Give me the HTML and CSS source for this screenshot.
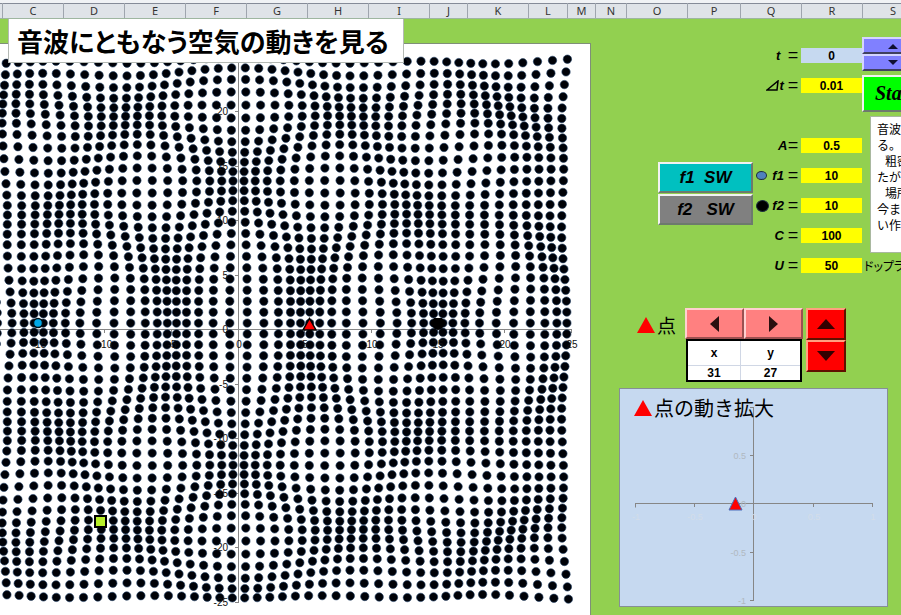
FILE: index.html
```html
<!DOCTYPE html>
<html lang="ja">
<head>
<meta charset="utf-8">
<title>音波にともなう空気の動きを見る</title>
<link rel="stylesheet" href="styles.css">
</head>
<body>
<header class="columns">
  <span class="col col-edge"></span><span class="col">C</span><span class="col">D</span><span class="col">E</span><span class="col">F</span><span class="col">G</span><span class="col">H</span><span class="col">I</span><span class="col col-j">J</span><span class="col">K</span><span class="col col-l">L</span><span class="col col-m">M</span><span class="col col-n">N</span><span class="col">O</span><span class="col col-p">P</span><span class="col">Q</span><span class="col">R</span><span class="col">S</span>
</header>
<main class="sheet">
  <section class="field">
    <h1 class="title">音波にともなう空気の動きを見る</h1>
    <svg class="chart" viewBox="0 44 590 571" role="img" aria-label="空気の動き">
      <g class="axis" id="axis"></g>
      <g class="dots" id="dots"></g>
      <g class="ticks" id="ticks"></g>
      <circle class="source-one" cx="38" cy="323" r="4.5"/>
      <path d="M430.500 323l3.500-5h8l3.500 5-3.500 5.500-4 1.500-4-1.500z"/>
      <path class="probe" d="M309.500 318.500l6.500 11.500h-13z"/>
      <rect class="marker" x="95" y="516" width="11" height="11"/>
    </svg>
  </section>

  <section class="side">
    <div class="controls">
      <div class="switches">
        <button class="raised switch switch-on">f1&nbsp; SW</button>
        <button class="raised switch switch-off">f2&nbsp;&nbsp; SW</button>
      </div>
      <div class="params">
        <div class="param"><label for="t">t&nbsp; <span class="eq">=</span></label><input class="cell cell-time" id="t" value="0"></div>
        <div class="param param-last"><label for="dt"><svg class="delta" viewBox="0 0 14 11" aria-label="Δ"><path d="M1 10L12 1L11 10Z"/></svg>t <span class="eq">=</span></label><input class="cell" id="dt" value="0.01"></div>
        <div class="param"><label for="a">A<span class="eq">=</span></label><input class="cell" id="a" value="0.5"></div>
        <div class="param"><i class="dot dot-one"></i><label for="f1">f1 <span class="eq">=</span></label><input class="cell" id="f1" value="10"></div>
        <div class="param"><i class="dot dot-two"></i><label for="f2">f2 <span class="eq">=</span></label><input class="cell" id="f2" value="10"></div>
        <div class="param"><label for="c">C <span class="eq">=</span></label><input class="cell" id="c" value="100"></div>
        <div class="param"><label for="u">U <span class="eq">=</span></label><input class="cell" id="u" value="50"></div>
      </div>
      <div class="extras">
        <button class="spin" aria-label="増やす"><svg viewBox="0 0 10 6"><path d="M0 6L5 1L10 6Z"/></svg></button>
        <button class="spin" aria-label="減らす"><svg viewBox="0 0 10 6"><path d="M0 0L5 5L10 0Z"/></svg></button>
        <button class="raised start">Start</button>
        <p class="note">音波<br>る。<br><span class="indent">粗密</span><br>たが<br><span class="indent">場所</span><br>今ま<br>い作</p>
        <p class="doppler">ドップラ</p>
      </div>
    </div>

    <div class="point">
      <div class="point-name"><svg class="tri" viewBox="0 0 18 16"><path d="M9 0L18 16H0Z"/></svg>点</div>
      <div class="point-box">
        <div class="pair">
          <button class="raised pink" aria-label="左"><svg viewBox="0 0 9 16"><path d="M9 0V16L0 8Z"/></svg></button>
          <button class="raised pink" aria-label="右"><svg viewBox="0 0 9 16"><path d="M0 0V16L9 8Z"/></svg></button>
        </div>
        <table class="xy">
          <thead><tr><th>x</th><th>y</th></tr></thead>
          <tbody><tr><td>31</td><td>27</td></tr></tbody>
        </table>
      </div>
      <div class="stack">
        <button class="raised red" aria-label="上"><svg viewBox="0 0 18 10"><path d="M0 10L9 0L18 10Z"/></svg></button>
        <button class="raised red" aria-label="下"><svg viewBox="0 0 18 10"><path d="M0 0L9 10L18 0Z"/></svg></button>
      </div>
    </div>

    <div class="zoom">
      <svg class="zoom-chart" viewBox="0 0 267 217" role="img" aria-label="点の動き拡大">
        <path class="zoom-axis" d="M15.500 118.500v-3.500M15 114.500h238M252.500 115v3M74.500 115v3M193.500 115v3M133.500 18v194M130 18.500h4M130 66.500h4M130 163.500h4M130 211.500h4"/>
        <g class="zoom-y"><text x="126" y="70">0.5</text><text x="126" y="118">0</text><text x="126" y="167">-0.5</text><text x="126" y="215">-1</text></g>
        <g class="zoom-x"><text x="16" y="131">-1</text><text x="75" y="131">-0.5</text><text x="134" y="131">0</text><text x="194" y="131">0.5</text><text x="253" y="131">1</text></g>
        <path class="zoom-point" d="M115.500 108l6.500 13h-13z"/>
      </svg>
      <h2 class="zoom-title"><svg class="tri" viewBox="0 0 18 16"><path d="M9 0L18 16H0Z"/></svg>点の動き拡大</h2>
    </div>
  </section>
</main>
<script src="script.js"></script>
</body>
</html>
```
FILE: styles.css
```css
* { box-sizing: border-box; }
body {
  margin: 0;
  min-height: 100vh;
  overflow: hidden;
  background: #92d050;
  color: #000;
  font: 12px "Liberation Sans", "Noto Sans CJK JP", sans-serif;
}
button, input { font: inherit; color: inherit; padding: 0; margin: 0; border-radius: 0; }
svg { display: block; }

.columns {
  display: flex;
  height: 19px;
  overflow: hidden;
  border-top: 3px solid #f0f2f5;
  border-bottom: 1px solid #9eb6a0;
  background: #dfe3e8;
  box-shadow: inset 0 1px #858b98;
}
.col {
  flex: 0 0 61px;
  border-right: 1px solid #9fa5ae;
  color: #333;
  font: 11px/16px "Noto Sans", sans-serif;
  text-align: center;
}
.col-edge { flex-basis: 3px; }
.col-j { flex-basis: 38px; }
.col-l { flex-basis: 39px; }
.col-m { flex-basis: 28px; }
.col-n { flex-basis: 31px; }
.col-p { flex-basis: 53px; }

.sheet {
  display: grid;
  grid-template-columns: minmax(0, 591px) minmax(310px, 1fr);
}
.field { position: relative; padding-top: 24px; }
.title {
  position: absolute;
  left: 8px;
  top: 0;
  margin: 0;
  padding: 0 14px 0 8px;
  border: 1px solid #b4b9b4;
  border-top: 0;
  background: #fff;
  font: bold 26px/43px "Noto Sans CJK JP", sans-serif;
  font-feature-settings: "palt";
  white-space: nowrap;
}
.chart {
  width: 100%;
  background: #fff;
  border-top: 1px solid #7f8f78;
  border-right: 1px solid #7f8f78;
}
.axis path { fill: none; stroke: #868686; }
.dots circle { fill: #000208; stroke: #203f66; stroke-width: 0.6; }
.ticks text { font: 10px "Liberation Sans", sans-serif; fill: #111; }
.ticks .y { text-anchor: end; }
.ticks .x { text-anchor: middle; }
.source-one { fill: #00a8e8; stroke: #001018; stroke-width: 1.5; }
.probe { fill: #f00; stroke: #000; stroke-width: 1.5; }
.marker { fill: #b8f02a; stroke: #000; stroke-width: 2; }

.controls { display: flex; height: 264px; }
.switches { flex: 0 0 162px; padding: 143px 0 0 67px; }
.raised {
  display: block;
  border: 2px solid;
  border-color: #f2f2f2 #6d7a6d #6d7a6d #f2f2f2;
}
.switch {
  width: 95px;
  height: 31px;
  margin-bottom: 1px;
  font: italic bold 17px "Liberation Sans", sans-serif;
  line-height: 26px;
}
.switch-on { background: #00c0c0; }
.switch-off { background: #808080; }

.params { flex: 0 0 109px; padding-top: 29px; }
.param {
  display: flex;
  align-items: center;
  justify-content: flex-end;
  height: 15px;
  margin-bottom: 15px;
}
.param-last { margin-bottom: 45px; }
.param label {
  display: flex;
  align-items: center;
  margin-right: 3px;
  font: italic bold 13px/15px "Liberation Sans", sans-serif;
  white-space: pre;
}
.eq { font-size: 18px; font-weight: normal; }
.delta { width: 14px; height: 11px; fill: none; stroke: #000; stroke-width: 1.5; }
.cell {
  flex: 0 0 61px;
  width: 61px;
  height: 15px;
  border: 0;
  background: #ff0;
  font-weight: bold;
  text-align: center;
}
.cell-time { background: #c6d9f0; }
.dot { border: 1px solid #1c2c40; border-radius: 50%; margin-right: auto; }
.dot-one { width: 11px; height: 9px; margin-left: 3px; background: #4f81bd; }
.dot-two { width: 13px; height: 12px; margin-left: 3px; background: #000; }

.extras { flex: 1 1 0; min-width: 0; overflow: hidden; padding-top: 18px; }
.spin {
  display: flex;
  width: 61px;
  height: 17px;
  align-items: center;
  justify-content: center;
  border: 2px solid;
  border-color: #d4d4ff #404060 #404060 #d4d4ff;
  background: #8080ff;
}
.spin svg { width: 10px; height: 6px; fill: #101030; }
.start {
  width: 85px;
  height: 37px;
  margin-top: 4px;
  padding-left: 11px;
  background: #0f0;
  font: italic bold 20px "Liberation Serif", serif;
  text-align: left;
}
.note {
  width: 180px;
  height: 137px;
  margin: 4px 0 0 8px;
  padding: 4px 0 0 6px;
  border: 1px solid #a9b8a0;
  background: #fff;
  font: 12px/16px "Noto Sans CJK JP", sans-serif;
}
.indent { padding-left: 8px; }
.doppler {
  margin: 5px 0 0 2px;
  font: 12px/16px "Noto Sans CJK JP", sans-serif;
  font-feature-settings: "palt";
  white-space: nowrap;
}

.point { display: flex; height: 105px; padding: 25px 0 0 46px; }
.point-name {
  display: flex;
  flex: 0 0 48px;
  height: 34px;
  align-items: center;
  font: 19px/34px "Noto Sans CJK JP", sans-serif;
}
.tri { flex: none; width: 18px; height: 16px; margin-right: 2px; fill: #f00; }
.point-box { flex: 0 0 118px; }
.pair { display: flex; }
.pink {
  display: flex;
  flex: 1;
  height: 31px;
  align-items: center;
  justify-content: center;
  border-color: #ffd0d0 #9c5050 #9c5050 #ffd0d0;
  background: #ff8080;
}
.pink svg { width: 9px; height: 16px; fill: #2a1010; }
.xy {
  width: 116px;
  height: 43px;
  margin-left: 1px;
  border: 2px solid #000;
  border-collapse: collapse;
  table-layout: fixed;
  background: #fff;
  font-size: 12px;
  font-weight: bold;
  text-align: center;
}
.xy th, .xy td { padding: 0; line-height: 14px; }
.xy th { height: 25px; border-bottom: 1px solid #d0d7e5; }
.xy th:first-child { width: 47%; }
.xy th:first-child, .xy td:first-child { border-right: 1px solid #d0d7e5; }
.stack { margin-left: 3px; }
.red {
  display: flex;
  width: 40px;
  height: 32px;
  align-items: center;
  justify-content: center;
  border-color: #ffa080 #601000 #601000 #ffa080;
  background: #f00;
}
.red svg { width: 18px; height: 10px; fill: #300; }

.zoom {
  position: relative;
  width: 269px;
  margin-left: 28px;
  border: 1px solid #868f96;
  background: #c6d9f0;
}
.zoom-chart { width: 100%; }
.zoom-title {
  position: absolute;
  left: 14px;
  top: 5px;
  display: flex;
  align-items: center;
  margin: 0;
  font: 20px/28px "Noto Sans CJK JP", sans-serif;
}
.zoom-axis { fill: none; stroke: #868686; }
.zoom-y text, .zoom-x text { font: 9px "Liberation Sans", sans-serif; fill: #b0b8c0; }
.zoom-y text { text-anchor: end; }
.zoom-x text { text-anchor: middle; fill: #d3dde9; }
.zoom-point { fill: #f00; stroke: #4a6ebb; }
```
FILE: script.js
```js
// Air particles displaced by two in-phase point sources (t = 0).
const NS = 'http://www.w3.org/2000/svg';
const UX = 13.32, UY = 10.9, OX = 238.5, OY = 329;
const WAVELENGTH = 10, AMPLITUDE = 0.25;
const SOURCES = [[-15, 0.5], [15, 0.5]];

function add(parent, tag, attrs, text) {
  const el = document.createElementNS(NS, tag);
  for (const key in attrs) el.setAttribute(key, attrs[key]);
  if (text !== undefined) el.textContent = text;
  document.getElementById(parent).appendChild(el);
}

for (let i = -25; i < 25; i++) {
  for (let j = -25; j < 25; j++) {
    const x = i + 0.5, y = j + 0.5;
    let u = 0, v = 0;
    for (const [sx, sy] of SOURCES) {
      const dx = x - sx, dy = y - sy, r = Math.hypot(dx, dy);
      const a = -AMPLITUDE * Math.sin(2 * Math.PI * r / WAVELENGTH);
      u += a * dx / r;
      v += a * dy / r;
    }
    const cx = OX + (x + u) * UX;
    if (cx > -6) add('dots', 'circle', { cx: cx.toFixed(1), cy: (OY - 0.5 - (y + v) * UY).toFixed(1), r: 4.2 });
  }
}

let path = 'M0 329.5H571.500M238.500 57V602';
for (let n = -25; n <= 25; n += 5) {
  const px = Math.round(OX + n * UX), py = Math.round(OY - n * UY);
  path += `M${px - 0.5} 329v4M235 ${py + 0.5}h4`;
  if (px > 0) add('ticks', 'text', { class: 'x', x: px, y: 348 }, n);
  if (n < 25) add('ticks', 'text', { class: 'y', x: 228, y: py + 4 }, n);
}
add('axis', 'path', { d: path });
```
